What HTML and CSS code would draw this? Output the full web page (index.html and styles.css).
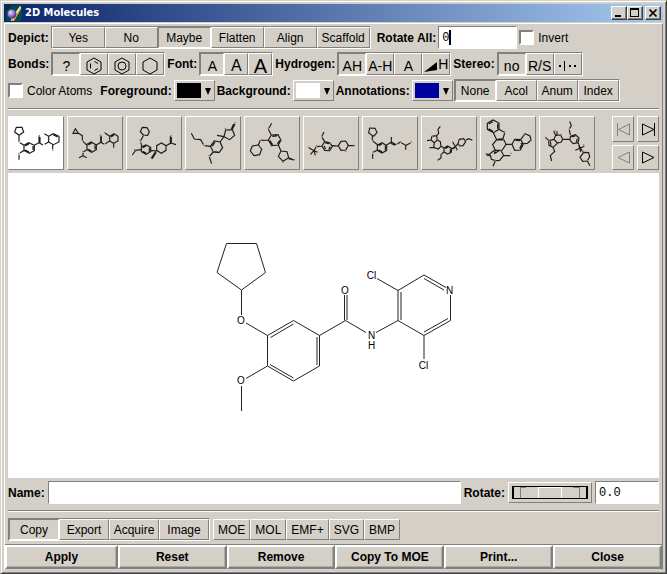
FILE: index.html
```html
<!DOCTYPE html>
<html lang="en">
<head>
<meta charset="utf-8">
<title>2D Molecules</title>
<link rel="stylesheet" href="styles.css">
</head>
<body>
<div class="window">
  <header class="titlebar">
    <svg class="logo" viewBox="0 0 16 16" aria-hidden="true">
      <defs><radialGradient id="orb" cx=".35" cy=".35" r=".7"><stop offset="0" stop-color="#e8d8ff"/><stop offset=".5" stop-color="#9a7ad0"/><stop offset="1" stop-color="#3a2470"/></radialGradient></defs>
      <rect width="16" height="16" fill="#064850"/>
      <path d="M0 0h7L0 6z" fill="#0a2a38"/>
      <path d="M5 14l10-13v3L8 16H5z" fill="#e8b850"/>
      <path d="M9 8l5-7 1 1-5 8z" fill="#f8e0a0"/>
      <circle cx="6" cy="9" r="4.5" fill="url(#orb)"/>
    </svg>
    <h1 class="title">2D Molecules</h1>
    <div class="caption-buttons">
      <button class="cap" aria-label="Minimize"><svg viewBox="0 0 12 10"><path d="M2 7h6v2H2z"/></svg></button>
      <button class="cap" aria-label="Maximize"><svg viewBox="0 0 12 10"><path d="M1 0h9v9H1zM2 2v6h7V2z" fill-rule="evenodd"/></svg></button>
      <button class="cap cap-close" aria-label="Close window"><svg viewBox="0 0 12 10"><path d="M2.500 1.500l7 7M9.500 1.500l-7 7" stroke="#000" stroke-width="1.700"/></svg></button>
    </div>
  </header>

  <main class="panel">
    <div class="row">
      <span class="label">Depict:</span>
      <div class="group wide" role="group" aria-label="Depict">
        <button>Yes</button><button>No</button><button aria-pressed="true">Maybe</button><button>Flatten</button><button>Align</button><button>Scaffold</button>
      </div>
      <label class="label rotate-all" for="rotall">Rotate All:</label>
      <span class="caret-field"><input id="rotall" class="field short" type="text" value="0"></span>
      <label class="check"><input type="checkbox">Invert</label>
    </div>

    <div class="row row-icons">
      <span class="label">Bonds:</span>
      <div class="group icons" role="group" aria-label="Bonds">
        <button aria-pressed="true">?</button>
        <button aria-label="Kekule"><svg class="hex" viewBox="0 0 16 18"><path d="M8 1l7 4v8l-7 4-7-4V5zM4.500 6.500v5M8.500 4.500l3.500 2M8.500 13.500l3.500-2"/></svg></button>
        <button aria-label="Aromatic"><svg class="hex" viewBox="0 0 16 18"><path d="M8 1l7 4v8l-7 4-7-4V5z"/><circle cx="8" cy="9" r="4"/></svg></button>
        <button aria-label="Plain"><svg class="hex" viewBox="0 0 16 18"><path d="M8 1l7 4v8l-7 4-7-4V5z"/></svg></button>
      </div>
      <span class="label">Font:</span>
      <div class="group fonts" role="group" aria-label="Font">
        <button class="f-small" aria-pressed="true">A</button><button class="f-medium">A</button><button class="f-large">A</button>
      </div>
      <span class="label">Hydrogen:</span>
      <div class="group icons" role="group" aria-label="Hydrogen">
        <button aria-pressed="true">AH</button><button>A-H</button><button>A</button>
        <button class="wedge"><svg viewBox="0 0 14 10" aria-hidden="true"><path d="M0 10L13 0v8z"/></svg>H</button>
      </div>
      <span class="label">Stereo:</span>
      <div class="group icons" role="group" aria-label="Stereo">
        <button aria-pressed="true">no</button><button>R/S</button>
        <button aria-label="Stereo marks"><svg class="marks" viewBox="0 0 18 12"><path d="M0 5h2v2H0zM5 1h1v10H5zM10 5h2v2h-2zM15 5h2v2h-2z"/></svg></button>
      </div>
    </div>

    <div class="row">
      <label class="check first"><input type="checkbox">Color Atoms</label>
      <label class="label" for="fg">Foreground:</label>
      <span class="swatch"><select id="fg" class="black"><option>Black</option></select></span>
      <label class="label" for="bg">Background:</label>
      <span class="swatch"><select id="bg" class="white"><option>White</option></select></span>
      <label class="label" for="an">Annotations:</label>
      <span class="swatch"><select id="an" class="blue"><option>Blue</option></select></span>
      <div class="group notes" role="group" aria-label="Annotations">
        <button aria-pressed="true">None</button><button>Acol</button><button>Anum</button><button>Index</button>
      </div>
    </div>

    <hr>

    <div class="strip">
      <button class="thumb" aria-pressed="true" aria-label="Molecule 1"><svg viewBox="27 30 162 156">
        <path d="M57 85l-13-10 5-14h17l5 14zV102M60 107l12 8M72 115l14-8 17 8v16l-15 8-16-9zM76 117l11-7M99 117v12M76 129l11 6M72 130l-12 8M57 143v15M103 115l14-8V88M120 107V90M117 107l12 7M134 112l12-7V88l-13-8M146 88l14-8 17 8v17l-17 8-14-8M160 84l13 6M158 113V127"/>
        <path class="o" d="M55 102h4v4h-4zM55 138h4v4h-4zM116 84h4v4h-4zM156 128h4v3h-4z"/></svg></button>
      <button class="thumb" aria-label="Molecule 2"><svg viewBox="204 30 162 156">
        <path d="M226 65l-7 14h16zM235 79l12 7v14M249 103l12 12M261 112l13-7 15 9v14l-14 8-14-8zM265 114l10-6M285 115v12M265 127l10 6M261 128l-12 7M249 138v8M249 146l-12 6M249 146l11 6M289 114l13-8V88M304 106V88M302 106l11 6M316 110l13-8V88l-14-10M329 88l13-8 12 8v14l-13 7-12-7M333 90l9-6M341 109v12"/>
        <path class="o" d="M247 100h4v4h-4zM247 132h4v4h-4zM299 83h5v4h-5zM312 76h4v3h-4zM339 120h4v4h-4z"/></svg></button>
      <button class="thumb" aria-label="Molecule 3"><svg viewBox="381 30 162 156">
        <path d="M430 84l-9-10 6-13 14 1 7 12-5 11zM430 86l-9 17M422 106l4 12M424 120l14-6 14 7v13l-14 8-14-8zM428 122l10-5M448 122v12M428 133l10 5M424 128l-18 2M406 131l-9 13M452 130l18 2M470 130v-14l14-8 14 8v14l-14 9zM498 116l13-7V88M514 109V90M512 108l16 5M468 132l-14 21"/>
        <path d="M468 136l-12 19" stroke-width="5"/><path class="o" d="M418 98h4v4h-4zM402 126h4v4h-4zM512 84h4v4h-4zM452 152h4v4h-4z"/></svg></button>
      <button class="thumb" aria-label="Molecule 4"><svg viewBox="18 30 162 156">
        <path d="M34 79l9 17 19 2 8 14M74 116l17 2M91 118l12-16 17 3 8 17-11 15-17-2zM96 118l9-12M122 108l5 13M103 134l12 1M100 135l-11 12M88 150l7 20M120 105l12-16M132 89l-21-4M132 89l5-20 20-1 7 17-15 13zM157 67l8-16M154 66l7-15"/>
        <path class="o" d="M68 112h4v4h-4zM85 144h4v4h-4zM163 45h4v4h-4zM134 63h4v4h-4z"/></svg></button>
      <button class="thumb" aria-label="Molecule 5"><svg viewBox="75 30 162 156">
        <path d="M155 49l-8 14M145 67l9 17M154 84l20-1 9 17-8 14-20 2-10-17zM157 88l14-1M179 100l-7 11M149 100l9 13M145 99l-20 1M121 100l-6 14M115 114l10 12-6 17-17 3-11-14 6-15zM175 114l8 18M183 132l18 2 5 18-17 11-14-15zM206 152l16 7M206 155l15 4"/>
        <path class="o" d="M143 62h4v4h-4zM122 96h4v4h-4zM187 164h4v4h-4zM221 156h4v4h-4z"/></svg></button>
      <button class="thumb" aria-label="Molecule 6"><svg viewBox="252 30 162 156">
        <path d="M312 75l-6 13M306 91l8 13M314 104l15 3 8 11-8 13-15-1-8-13zM316 108l11 2M331 119l-5 8M312 117l5 9M306 117l-15 2M288 120l-6 11M282 131l-15-9M282 131l11 5M282 131l-11 11M282 131l4 14M337 116l18 1M355 116l8-13 14-1 8 13-8 14-14 1zM385 115l17 1"/>
        <path class="o" d="M304 85h4v4h-4zM287 115h5v4h-5zM264 119h4v4h-4zM270 140h4v4h-4zM374 130h5v4h-5zM401 113h4v5h-4z"/></svg></button>
      <button class="thumb" aria-label="Molecule 7"><svg viewBox="429 30 162 156">
        <path d="M457 86l-11-9 3-14 16 1 6 12-9 11zM457 87v13M459 103l14 10M472 114l14-7 14 9v14l-14 8-14-8zM476 116l10-5M496 117v12M476 129l10 5M472 129l-12 7M458 140v15M500 114l14-9V90M514 105l15 8M512 109l13 6M532 111l9-6M544 107l13 8V128M559 115l12-7"/>
        <path class="o" d="M456 99h4v4h-4zM457 133h4v4h-4zM540 102h4v4h-4zM554 126h5v3h-5zM572 103h4v4h-4z"/></svg></button>
      <button class="thumb" aria-label="Molecule 8"><svg viewBox="18 30 162 156">
        <path d="M73 58l-7 9 2 12-6 7M62 86l-14 2-3 11 10 8 9-8zM45 99l-12 2M55 107l-2 14M53 121l14 5 8-8-2-14-9-5M53 121l-12 1M75 118l9 5M84 123l11-6 12 8-1 11-12 5-10-7zM88 125l8-5M103 127v8M84 135l-9 8v10l-10 7M107 125l11-6M110 105l14 24M111 126l12-12M118 119l8-9M126 109l4-12 13-2 6 9-8 12-10 1zM149 100l9-5 11 5"/>
        <path class="o" d="M48 86h4v4h-4zM39 120h4v4h-4zM64 96h4v4h-4zM73 141h4v4h-4zM108 103h4v4h-4zM120 127h4v4h-4zM146 98h4v4h-4z"/></svg></button>
      <button class="thumb" aria-label="Molecule 9"><svg viewBox="117 30 162 156">
        <path d="M136 49l17-10 18 9v19l-17 10-18-10zM140 51l13-7M167 50v15M140 65l13 8M171 67l16 9M188 78l-5 17-19 3M154 77l10 21M164 98l22 1 6 13-11 17-21 1-8-17zM192 112h18M210 112l8-15 18 1 8 14-9 17-17 1zM221 100l13 1M240 112l-7 12M236 98l13-18 15 7 3 12-11 10-20 1M160 130l-3 10M157 130l-13 10M157 140l16-10M144 142l-11-1M145 147l-12-3M145 143l3 14 12 4 13-1 12-15-8-14M185 145l20 1M160 161l-7 17"/>
        <path class="o" d="M185 72h5v4h-5zM246 79h4v4h-4zM264 100h4v4h-4zM205 137h4v4h-4zM130 138h4v4h-4zM157 158h5v4h-5z"/></svg></button>
      <button class="thumb" aria-label="Molecule 10"><svg viewBox="294 30 162 156">
        <path d="M383 43l5 14-6 8M382 69l3 15M385 88l15-5 11 10-3 14-15 3-9-11zM389 90l11-3M406 95l-3 10M362 97h22M362 97l-6-13-15 1-5 12 10 11 12-3zM341 85l-6-12M345 84v-11M336 97l-16 4 1 14 12 6 13-12M320 100l-10-9M333 121l5 12-13 13 4 16M325 103l2 12M408 107l7 16M400 130l27-12M410 113l6 22M415 123l10 15M425 136l15 1 3 13-8 12-13 1-8-12zM436 162l8 14"/>
        <path class="o" d="M380 64h4v4h-4zM336 70h5v4h-5zM319 98h4v4h-4zM355 82h5v4h-5zM409 111h4v4h-4zM423 111h4v4h-4zM420 133h4v4h-4zM435 159h4v4h-4z"/></svg></button>
      <div class="nav">
        <button class="dim" aria-label="First"><svg viewBox="0 0 20 20"><path d="M4.500 4v13M16.500 5v11L5.500 10.500z"/></svg></button>
        <button aria-label="Last"><svg viewBox="0 0 20 20"><path d="M16.500 4v13M4.500 5v11L16 10.500z"/></svg></button>
        <button class="dim" aria-label="Previous"><svg viewBox="0 0 20 20"><path d="M16.500 5v11L5 10.500z"/></svg></button>
        <button aria-label="Next"><svg viewBox="0 0 20 20"><path d="M4.500 5v11L16 10.500z"/></svg></button>
      </div>
    </div>

    <div class="canvas">
      <svg class="molecule" viewBox="203 231 261 190" role="img" aria-label="Structure drawing">
        <path d="M241.500 290L217 272.500 226.500 243.500H256.500L265.500 272.500ZV315M246 323L267.500 335.500M267.500 335.500L293.500 320.500 319.500 335.500V366L293.500 381 267.500 366ZM270.500 337.500L293.500 324M317 337V365M270 364.500L293.500 378M267.500 366L246 378.500M241.500 386V411M319.500 335.500L345.500 320.500M344.500 320.500V295M347 320V295M345.500 320.500L366 332.500M376 332.500L398 320.500M398 320.500V290.500L424 275 446 287.500M398 320.500L424 335.500 450.500 320.500V295M401 320V292M424 278.500L444 290M424 332L448 318.500M398 290.500L377 278.500M424 335.500V359"/>
        <g class="atoms"><text x="241" y="323.500">O</text><text x="241" y="383.500">O</text><text x="345" y="293.500">O</text><text x="371.500" y="338.500">N</text><text x="371.500" y="348.500">H</text><text x="371.500" y="278.500">Cl</text><text x="423.500" y="368.500">Cl</text><text x="449.500" y="293.500">N</text></g>
      </svg>
    </div>

    <div class="row name-row">
      <label class="label" for="name">Name:</label>
      <input id="name" class="field grow" type="text">
      <label class="label" for="wheel">Rotate:</label>
      <span class="wheel"><input id="wheel" type="range" min="-180" max="180" value="0"></span>
      <input class="field angle" type="text" value="0.0" aria-label="Rotation angle">
    </div>

    <hr>

    <div class="row">
      <div class="group modes" role="group" aria-label="Mode">
        <button aria-pressed="true">Copy</button><button>Export</button><button>Acquire</button><button>Image</button>
      </div>
      <div class="formats">
        <button>MOE</button><button>MOL</button><button>EMF+</button><button>SVG</button><button>BMP</button>
      </div>
    </div>

    <footer class="actions">
      <button>Apply</button><button>Reset</button><button>Remove</button><button>Copy To MOE</button><button>Print...</button><button>Close</button>
    </footer>
  </main>
</div>
</body>
</html>
```
FILE: styles.css
```css
:root {
  --face: #d4d0c8;
  --shade: #808080;
}

* { box-sizing: border-box; }

body {
  margin: 0;
  font: 12px/14px "Liberation Sans", Arial, sans-serif;
  color: #000;
  background: var(--face);
}

button, input, select {
  font: inherit;
  color: inherit;
  margin: 0;
  padding: 0;
  border-radius: 0;
}

button { background: var(--face); white-space: nowrap; }
button svg { display: block; }

.window {
  min-height: 100vh;
  display: flex;
  flex-direction: column;
  padding: 3px;
  border: 1px solid;
  border-color: var(--face) #404040 #404040 var(--face);
  box-shadow: inset 1px 1px #fff, inset -1px -1px var(--shade);
}

.titlebar {
  display: flex;
  align-items: center;
  height: 18px;
  padding: 0 2px;
  background: linear-gradient(90deg, #0a246a, #a6caf0);
}
.logo { width: 16px; height: 16px; }
.title {
  flex: 1;
  margin: 0 0 0 3px;
  font: bold 11px/16px "DejaVu Sans Condensed", "DejaVu Sans", sans-serif;
  color: #fff;
}
.caption-buttons { display: flex; }
.cap {
  width: 16px;
  height: 14px;
  padding: 1px;
  border: 1px solid;
  border-color: #fff #404040 #404040 #fff;
  box-shadow: inset -1px -1px var(--shade);
}
.cap svg { width: 12px; height: 10px; }
.cap-close { margin-left: 2px; }

.panel {
  flex: 1;
  display: flex;
  flex-direction: column;
  margin-top: 1px;
  padding-top: 2px;
  border: 1px solid;
  border-color: #fff var(--shade) var(--face) #fff;
}
.panel > * { margin-left: 3px; margin-right: 3px; }

.row {
  display: flex;
  align-items: center;
  gap: 2px;
  height: 23px;
  margin-bottom: 3px;
}
.row-icons { height: 24px; }
.label { font-weight: bold; white-space: nowrap; }
.rotate-all { margin-left: 4px; }

.group {
  display: flex;
  height: 23px;
  border: 1px solid;
  border-color: var(--shade) #fff #fff var(--shade);
}
.group button, .formats button {
  border: 1px solid;
  border-color: #fff var(--shade) var(--shade) #fff;
}
.group button[aria-pressed="true"] { border-color: var(--shade) #fff #fff var(--shade); }
.wide button { width: 53px; }
.icons, .fonts { height: 24px; font-size: 14px; }
.icons button { width: 28px; display: flex; align-items: center; justify-content: center; padding-top: 3px; }
.fonts button { width: 24px; padding-top: 3px; }
.f-small { font-size: 14px; }
.f-medium { font-size: 16px; }
.f-large { font-size: 20px; }
.notes { margin-left: -1px; }
.notes button { width: 41px; }
.modes button { width: 50px; }
.hex { width: 16px; height: 18px; fill: none; stroke: #000; }
.marks { width: 18px; height: 12px; }
.wedge svg { width: 14px; height: 10px; flex: none; margin-top: 6px; }
.group .wedge { overflow: hidden; padding-top: 0; }

.field {
  height: 23px;
  padding: 0 3px;
  border: 1px solid;
  border-color: var(--shade) #fff #fff var(--shade);
  background: #fff;
  font: 12px/16px "Liberation Mono", monospace;
}
.short { width: 79px; }
.caret-field { position: relative; display: flex; }
.caret-field::after {
  content: "";
  position: absolute;
  left: 11px;
  top: 4px;
  width: 2px;
  height: 15px;
  background: #000;
}
.grow { flex: 1; min-width: 0; }
.angle { width: 64px; }

.check { display: flex; align-items: center; gap: 4px; white-space: nowrap; }
.check.first { margin-right: 6px; }
.check input {
  appearance: none;
  width: 15px;
  height: 15px;
  border: 2px solid;
  border-color: var(--shade) #fff #fff var(--shade);
  background: #fff;
}

.swatch { position: relative; display: flex; }
.swatch select {
  appearance: none;
  width: 41px;
  height: 21px;
  padding: 2px 13px 2px 2px;
  border: 1px solid;
  border-color: #fff var(--shade) var(--shade) #fff;
  background-color: var(--face);
  background-repeat: no-repeat;
  background-size: 24px 15px;
  background-position: 2px 2px;
  color: transparent;
}
.swatch .black { background-image: linear-gradient(#000, #000); }
.swatch .white { background-image: linear-gradient(#fff, #fff); }
.swatch .blue { background-image: linear-gradient(#0000a0, #0000a0); }
.swatch::after {
  content: "";
  position: absolute;
  right: 4px;
  top: 8px;
  border: 3px solid transparent;
  border-top: 7px solid #000;
  border-bottom: 0;
  pointer-events: none;
}

hr {
  width: auto;
  height: 2px;
  margin-top: 3px;
  margin-bottom: 6px;
  border: 0;
  border-top: 1px solid var(--shade);
  background: #fff;
}

.strip { display: flex; gap: 3px; }
.thumb, .nav button {
  border: 1px solid;
  border-color: #fff var(--shade) var(--shade) #fff;
}
.thumb { width: 56px; height: 54px; }
.thumb[aria-pressed="true"] { background: #fff; }
.thumb svg { width: 54px; height: 52px; fill: none; stroke: #1c1c1c; stroke-width: 3.5; }
.thumb .o { stroke: none; fill: #b06a3a; }
.nav {
  display: grid;
  grid-template-columns: 22px 22px;
  gap: 3px;
  margin-left: auto;
}
.nav svg { width: 20px; height: 20px; fill: none; stroke: #000; }
.nav .dim svg { stroke: var(--shade); }

.canvas {
  flex: 1;
  display: flex;
  align-items: center;
  justify-content: center;
  margin-top: 3px;
  margin-bottom: 3px;
  background: #fff;
}
.molecule { width: 261px; height: 190px; fill: none; stroke: #222; stroke-width: 1; }
.atoms { fill: #000; stroke: none; font-size: 10px; text-anchor: middle; }

.name-row { gap: 3px; }
.wheel {
  display: flex;
  padding: 3px;
  border: 1px solid;
  border-color: #fff var(--shade) var(--shade) #fff;
}
.wheel input {
  appearance: none;
  width: 76px;
  height: 13px;
  border: solid #000;
  border-width: 1px 2px;
  background:
    linear-gradient(90deg, transparent 6px, #808080 6px 7px, transparent 7px 24px, #fff 24px 25px, transparent 25px 47px, #fff 47px 48px, transparent 48px 65px, #808080 65px 66px, transparent 66px),
    linear-gradient(90deg, transparent 24px, #fff 24px 48px, transparent 48px) 0 0 / 100% 1px no-repeat,
    linear-gradient(90deg, transparent 7px, #808080 7px 12px, transparent 12px 59px, #808080 59px 66px, transparent 66px) 0 0 / 100% 1px no-repeat,
    var(--face);
}
.wheel input::-webkit-slider-thumb { appearance: none; width: 24px; height: 11px; background: transparent; }

.formats { display: flex; margin-left: 1px; }
.formats button { height: 21px; padding: 0 4px; }

.panel > .actions {
  display: grid;
  grid-template-columns: 113fr repeat(5, 109fr);
  margin: 0;
  border-top: 1px solid var(--shade);
}
.actions button {
  height: 24px;
  border: 2px solid;
  border-color: #fff var(--shade) var(--shade) #fff;
  box-shadow: inset -1px -1px #b0aca4;
  font-weight: bold;
}
```
